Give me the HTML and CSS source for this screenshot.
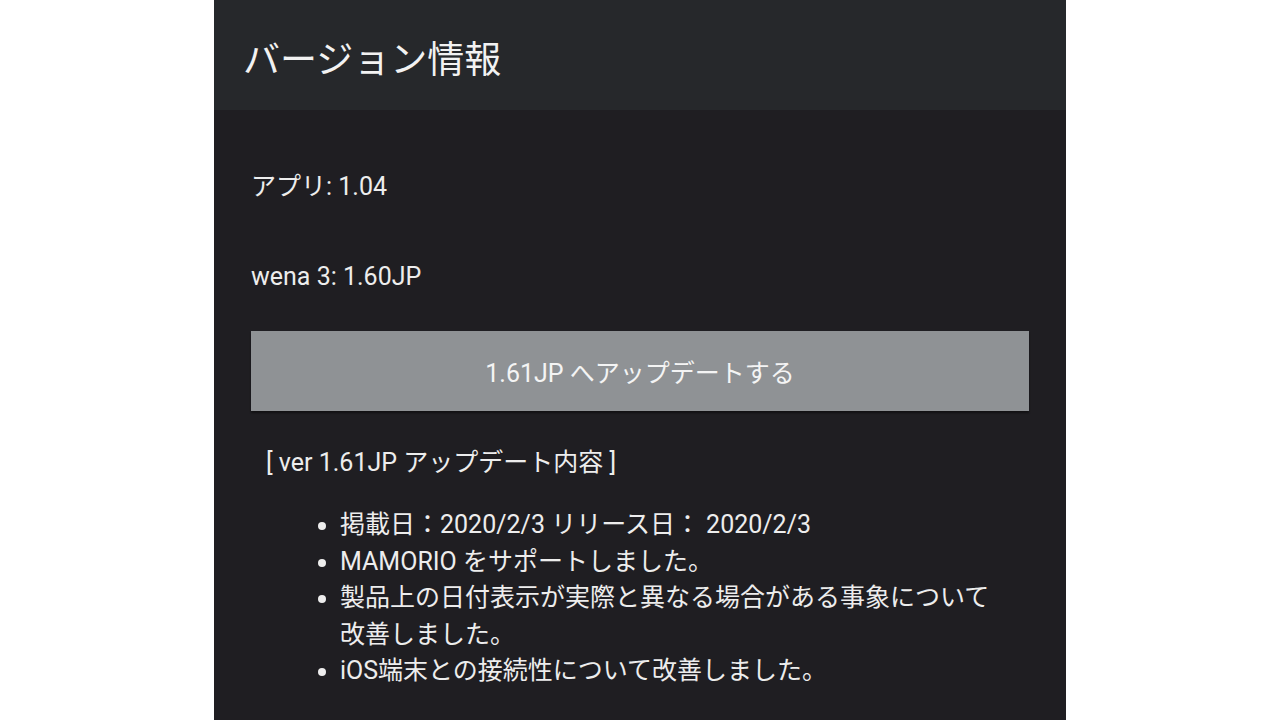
FILE: index.html
```html
<!DOCTYPE html>
<html lang="ja">
<head>
  <meta charset="UTF-8">
  <title>バージョン情報</title>
  <link rel="stylesheet" href="styles.css">
</head>
<body>
  <div class="panel">
    <header class="bar">
      <h1>バージョン情報</h1>
    </header>

    <div class="content">
      <p class="ver app">アプリ: 1.04</p>
      <p class="ver watch">wena 3: 1.60JP</p>

      <button class="update">1.61JP へアップデートする</button>

      <p class="notes-title">[ ver 1.61JP アップデート内容 ]</p>
      <ul class="notes">
        <li>掲載日：2020/2/3 リリース日： 2020/2/3</li>
        <li>MAMORIO をサポートしました。</li>
        <li>製品上の日付表示が実際と異なる場合がある事象について改善しました。</li>
        <li>iOS端末との接続性について改善しました。</li>
      </ul>
    </div>
  </div>
</body>
</html>
```

FILE: styles.css
```css
body { margin: 0; background: #fff; font-family: Roboto, "Noto Sans CJK JP", sans-serif; color: #ededed; }
.panel { width: 852px; min-height: 720px; margin: 0 auto; background: #1f1e22; overflow: hidden; }
.bar { height: 110px; box-sizing: border-box; padding: 3px 0 0 29px; background: #26282b; display: flex; align-items: center; }
.bar h1 { margin: 0; font-size: 37px; font-weight: 400; color: #f2f2f2; }
.content { padding: 0 37px; }
.ver { margin: 0; font-size: 25px; line-height: 36px; }
.app { margin-top: 59px; }
.watch { margin-top: 54px; }
.update { display: block; width: 100%; height: 80px; margin-top: 36px; border: 0; background: #8f9295; color: #f4f4f4; font-family: inherit; font-size: 25px; box-shadow: 0 2px 2px rgba(0, 0, 0, 0.45); }
.notes-title { margin: 34px 0 0; padding-left: 15px; font-size: 25px; line-height: 36px; }
.notes { margin: 26px 0 0; padding-left: 89px; padding-right: 20px; font-size: 25px; line-height: 36.5px; }
```
